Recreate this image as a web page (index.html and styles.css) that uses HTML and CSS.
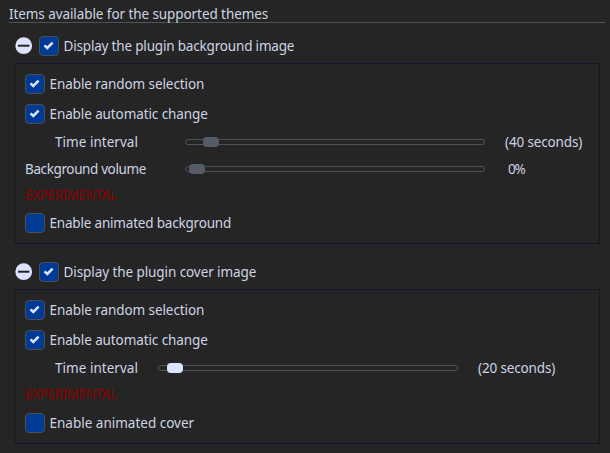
FILE: index.html
```html
<!DOCTYPE html>
<html lang="en">
<head>
<meta charset="utf-8">
<title>Supported themes</title>
<link rel="stylesheet" href="styles.css">
</head>
<body>
<svg class="defs" aria-hidden="true">
  <symbol id="check" viewBox="0 0 20 20"><path d="M5.5 9.4 8.3 12 13.6 6.7" fill="none" stroke="#dce3fc" stroke-width="2.6"/></symbol>
  <symbol id="minus" viewBox="0 0 18 18"><circle cx="8.7" cy="8.7" r="8.4" fill="#dce3fc"/><path d="M3 8.7h11.4" stroke="#252525" stroke-width="2"/></symbol>
</svg>
<main>
  <h1><span class="t-title">Items available for the supported themes</span></h1>
  <section>
    <header><svg class="minus"><use href="#minus"/></svg><span class="box"><svg><use href="#check"/></svg></span><span class="t-display-bg">Display the plugin background image</span></header>
    <div class="panel">
      <div class="option"><span class="box"><svg><use href="#check"/></svg></span><span class="t-random">Enable random selection</span></div>
      <div class="option"><span class="box"><svg><use href="#check"/></svg></span><span class="t-auto">Enable automatic change</span></div>
      <div class="range"><span class="label indent"><span class="t-time">Time interval</span></span><span class="track"><i class="thumb forty"></i></span><span class="value t-sec">(40 seconds)</span></div>
      <div class="range volume"><span class="label"><span class="t-vol">Background volume</span></span><span class="track"><i class="thumb zero"></i></span><span class="value percent t-pct">0%</span></div>
      <div class="warning"><span class="t-exp">EXPERIMENTAL</span></div>
      <div class="option"><span class="box"></span><span class="t-anim-bg">Enable animated background</span></div>
    </div>
  </section>
  <section>
    <header><svg class="minus"><use href="#minus"/></svg><span class="box"><svg><use href="#check"/></svg></span><span class="t-display-cover">Display the plugin cover image</span></header>
    <div class="panel cover">
      <div class="option"><span class="box"><svg><use href="#check"/></svg></span><span class="t-random">Enable random selection</span></div>
      <div class="option"><span class="box"><svg><use href="#check"/></svg></span><span class="t-auto">Enable automatic change</span></div>
      <div class="range"><span class="label indent"><span class="t-time">Time interval</span></span><span class="track"><i class="thumb active"></i></span><span class="value t-sec">(20 seconds)</span></div>
      <div class="warning"><span class="t-exp">EXPERIMENTAL</span></div>
      <div class="option"><span class="box"></span><span class="t-anim-cover">Enable animated cover</span></div>
    </div>
  </section>
</main>
</body>
</html>
```
FILE: styles.css
```css
* { box-sizing: border-box; }
body {
  margin: 0;
  background: #252525;
  color: #cdd4e4;
  font: 13.5px/20px "Trebuchet MS", "Noto Sans", sans-serif;
  white-space: nowrap;
}
.defs { position: absolute; width: 0; height: 0; }
main { padding: 4px 5px 0 9px; }
h1 {
  height: 19px;
  margin: 0 0 13px;
  border-bottom: 1px solid #4c545a;
  font-size: 13.5px;
  font-weight: 400;
}
header { display: flex; align-items: center; height: 20px; margin: 0 0 7px 6px; }
.minus { width: 18px; height: 18px; margin-right: 6px; }
.box {
  width: 20px;
  height: 20px;
  margin-right: 4.5px;
  border: 1px solid #4a4f55;
  border-radius: 4px;
  background: #003a94;
  flex: none;
}
.box svg { display: block; width: 20px; height: 20px; margin: -1px; }
.panel { margin: 0 5px 18px; padding: 10px; border: 1px solid #11192b; }
.option { display: flex; align-items: center; height: 20px; }
.option + .option { margin-top: 10px; }
.range { display: flex; align-items: center; height: 26px; margin-top: 5px; }
.range.volume { height: 28px; margin-top: 0; }
.label { width: 160px; }
.cover .label { width: 133px; }
.indent { padding-left: 30px; }
.track { width: 300px; height: 6px; border: 1px solid #4c545a; border-radius: 3px; flex: none; }
.thumb { display: block; width: 16px; height: 10px; margin-top: -3px; border-radius: 4px; background: #555b68; }
.forty { margin-left: 17px; }
.zero { margin-left: 3px; }
.active { margin-left: 8px; background: #dce3fc; }
.value { margin-left: 20px; }
.percent { margin-left: 23px; }
.warning { height: 24px; margin-bottom: 6px; line-height: 24px; color: #8b0000; }
.cover .warning { margin: 1px 0 7px; }

.t-title { letter-spacing: -0.08px; }
.t-display-bg { letter-spacing: -0.18px; }
.t-display-cover { letter-spacing: -0.08px; }
.t-random { letter-spacing: -0.08px; }
.t-auto { letter-spacing: -0.1px; }
.t-time { letter-spacing: 0.03px; }
.t-sec { letter-spacing: -0.15px; }
.t-vol { letter-spacing: -0.38px; }
.t-pct { letter-spacing: -1.3px; }
.t-exp { letter-spacing: -0.42px; }
.t-anim-bg { letter-spacing: -0.19px; }
```
